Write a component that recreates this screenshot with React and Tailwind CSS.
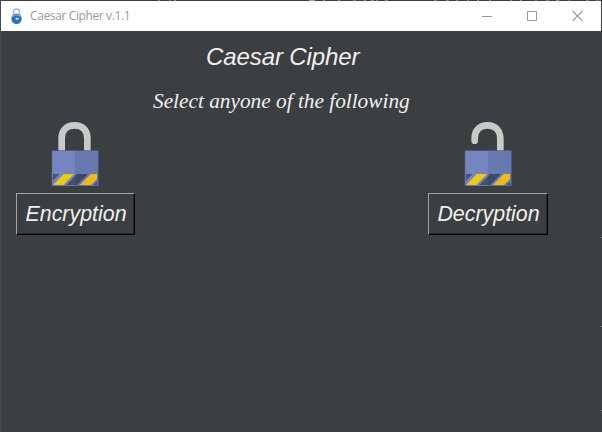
const edgeMarks = [
  [158, 2, '#6a8a94'], [169, 2, '#94765c'], [174, 2, '#7c9aa2'], [309, 6, '#a5a3a8'],
  [323, 2, '#a58a74'], [338, 2, '#9c9c94'], [353, 3, '#8b7785'], [364, 2, '#a89a80'],
  [371, 3, '#a58c7c'], [376, 2, '#7b8793'], [385, 3, '#a5806c'], [434, 3, '#8c7868'],
  [446, 3, '#748890'], [456, 2, '#a08060'], [467, 2, '#6888a0'], [477, 2, '#a08870'],
  [489, 2, '#608898'], [510, 2, '#a07858'], [520, 2, '#7890a0'], [535, 2, '#a08868'],
  [546, 3, '#688898'], [556, 3, '#a09078'], [568, 2, '#687898'], [586, 3, '#708898'], [596, 3, '#5888a0'],
];

function Padlock({ open }) {
  return (
    <svg className="mr-px block h-16 w-12" viewBox="0 0 144 192">
      {open ? (
        <path d="M32 56V49C32 25 47 10 71 10S109 27 109 51V87" fill="none" stroke="#c7cac7" strokeWidth="20" strokeLinecap="round" />
      ) : (
        <path d="M32 87V49C32 25 47 10 71 10S109 25 109 49V87" fill="none" stroke="#c7cac7" strokeWidth="20" />
      )}
      <path d="M2 85H143V192H2Z" fill="#53618e" />
      <path d="M4 87H72V191H4Z" fill="#7585c2" />
      <path d="M72 87H141V191H72Z" fill="#6879b0" />
      <path d="M6 156H25L6 177Z" fill="#4a556f" />
      <path d="M38 156H69L37 189H7Z" fill="#ebcb15" />
      <path d="M78 156H110L78 189H46Z" fill="#465067" />
      <path d="M72 162L78 156H110L78 189H72Z" fill="#3f4965" />
      <path d="M119 156H138V171L120 189H87Z" fill="#efb81b" />
      <path d="M138 179V189H128Z" fill="#3f4965" />
    </svg>
  );
}

function Choice({ label, open, width, className }) {
  return (
    <div className={`flex flex-col items-center ${className}`}>
      <Padlock open={open} />
      <button
        className={`mt-[7px] h-[42px] border border-t-[#a0a2a3] border-l-[#a0a2a3] border-r-black border-b-black pl-px whitespace-nowrap font-['Liberation_Sans',Arial,sans-serif] text-[21.4px] leading-10 text-[#f0f0f0] italic shadow-[inset_-1px_-1px_0_#252728] ${width}`}
      >
        {label}
      </button>
    </div>
  );
}

export default function App() {
  return (
    <main className="relative flex h-[432px] w-[602px] flex-col overflow-hidden border-l border-l-[#484b4e] bg-[#3c3f41]">
      <div className="h-px shrink-0 bg-[#3d3b3d]" />
      <header className="mr-px flex h-[30px] shrink-0 items-center bg-white">
        <svg className="mb-px ml-[9px] h-4 w-[13px]" viewBox="0 0 13 16">
          <path d="M3.5 8V4.5C3.5 2 4.7 1 6.5 1S9.5 2 9.5 4.5V8" fill="none" stroke="#a9b8c5" strokeWidth="1.6" />
          <circle cx="6.5" cy="10.7" r="5.2" fill="#2870c4" />
          <path d="M2.4 8.5Q6.5 5.2 10.6 8.5" fill="none" stroke="#86aedb" strokeWidth="1.4" />
          <circle cx="6.7" cy="10.8" r="1.2" fill="#c0dbf4" />
          <path d="M6.7 10.3H9V11.3H6.7Z" fill="#c0dbf4" />
        </svg>
        <h1 className="ml-[7px] font-['Open_Sans','Noto_Sans',sans-serif] text-[12px] leading-4 tracking-[-0.38px] text-[#999]">Caesar Cipher v.1.1</h1>
        <div className="mr-[18px] mb-px ml-auto flex h-full items-center gap-[34px]">
          <svg className="h-[11px] w-[11px]" viewBox="0 0 11 11"><path d="M0 6.5H10" stroke="#999" /></svg>
          <svg className="h-[11px] w-[11px]" viewBox="0 0 11 11"><path d="M.5 1.5H9.5V10.5H.5Z" fill="none" stroke="#999" /></svg>
          <svg className="h-[11px] w-[11px]" viewBox="0 0 11 11"><path d="M.5 1L10.5 11M10.5 1L.5 11" stroke="#999" strokeWidth="1.1" /></svg>
        </div>
      </header>
      <h2 className="mt-3 ml-[205px] font-['Liberation_Sans',Arial,sans-serif] text-[24px] leading-7 tracking-[-0.1px] whitespace-nowrap text-[#f0f0f0] italic">Caesar Cipher</h2>
      <p className="mt-[18px] ml-[152px] font-['Liberation_Serif','Times_New_Roman',serif] text-[21.3px] leading-6 whitespace-nowrap text-[#f0f0f0] italic">Select anyone of the following</p>
      <div className="mt-[9px] flex">
        <Choice label="Encryption" open={false} width="w-[119px]" className="ml-[15px]" />
        <Choice label="Decryption" open width="w-[120px]" className="ml-[293px]" />
      </div>
      <div className="mt-auto h-px bg-[#423c40]" />
      {edgeMarks.map(([x, width, color]) => (
        <i key={x} className="absolute top-0 h-px" style={{ left: x - 1, width, backgroundColor: color }} />
      ))}
      <i className="absolute top-[410px] -left-px h-px w-px bg-[#a8aeb5]" />
      <i className="absolute top-[420px] -left-px h-px w-px bg-[#aaa3cc]" />
      <i className="absolute top-[237px] right-0 h-px w-px bg-[#a4a49a]" />
      <i className="absolute top-[326px] right-0 h-px w-px bg-[#a4a49a]" />
      <i className="absolute top-[410px] right-0 h-px w-px bg-[#a4a49a]" />
    </main>
  );
}
